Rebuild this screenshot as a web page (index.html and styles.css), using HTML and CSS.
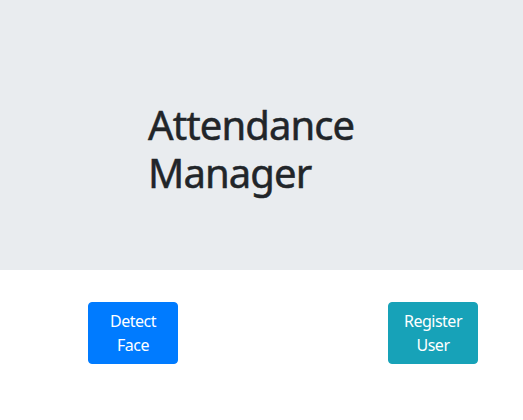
FILE: index.html
```html
<!DOCTYPE html>
<html>
<head>
<meta charset="utf-8">
<link rel="stylesheet" href="styles.css">
</head>
<body>
<div class="jumbotron">
  <h1 class="title">Attendance<br>Manager</h1>
</div>
<div class="actions">
  <button class="btn btn-primary">Detect Face</button>
  <button class="btn btn-info">Register User</button>
</div>
</body>
</html>
```
FILE: styles.css
```css
* { box-sizing: border-box; }
body {
  margin: 0;
  font-family: "Noto Sans", sans-serif;
  color: #212529;
  background: #fff;
}
.jumbotron {
  background: #e9ecef;
  height: 270px;
  padding: 101px 0 0 148px;
}
.title {
  margin: 0;
  font-size: 40px;
  font-weight: 400;
  line-height: 48px;
  letter-spacing: -0.9px;
  -webkit-text-stroke: 0.5px #212529;
}
.actions {
  display: flex;
  padding: 32px 45px 0 88px;
  justify-content: space-between;
}
.btn {
  width: 90px;
  font-family: inherit;
  font-size: 16px;
  line-height: 24px;
  padding: 6px 8px;
  border: 1px solid transparent;
  border-radius: 4px;
  color: #fff;
  text-align: center;
  letter-spacing: -0.5px;
}
.btn-primary { background: #007bff; border-color: #007bff; }
.btn-info { background: #17a2b8; border-color: #17a2b8; }
```
